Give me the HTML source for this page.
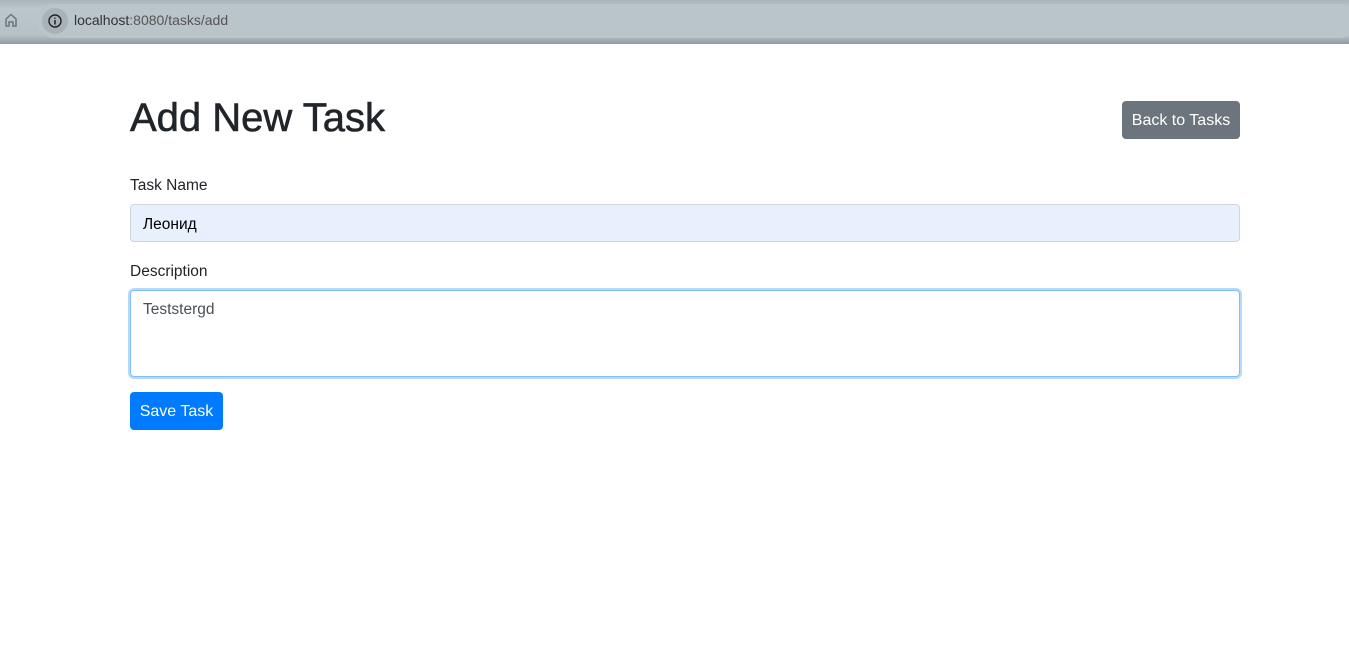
<!DOCTYPE html>
<html><head><meta charset="utf-8"><style>
body{margin:0;width:1349px;height:658px;background:#fff;font-family:"Liberation Sans","DejaVu Sans",sans-serif;color:#212529;position:relative;overflow:hidden}
.bar{position:absolute;left:0;top:0;width:1349px;height:44px;background:linear-gradient(#aab5bb,#bcc6cb 20%,#b6c1c6 80%,#8f9ca3)}
.pill{position:absolute;left:37px;top:4px;width:1320px;height:34px;border-radius:17px;background:#bac5ca}
.info{position:absolute;left:42px;top:8px;width:26px;height:26px;border-radius:13px;background:#a7b3b9}
.url{position:absolute;left:74px;top:12px;font-size:14px;color:#333}
.url span{color:#555}
.a{position:absolute}
h1{position:absolute;left:130px;top:96px;margin:0;font-size:40px;font-weight:normal;color:#212529;-webkit-text-stroke:0.6px #212529}
.btn{position:absolute;color:#fff;font-size:16px;border-radius:4px;display:flex;align-items:center;justify-content:center;padding-top:2px;box-sizing:border-box}
label{position:absolute;left:130px;font-size:15.5px}
.inp{position:absolute;left:130px;width:1110px;border:1px solid #ced4da;border-radius:4px;font-size:15.5px;padding-left:12px;box-sizing:border-box}
</style></head><body>
<div class="bar"></div>
<div class="pill"></div>
<svg class="a" style="left:4px;top:12px" width="14" height="16" viewBox="0 0 14 16"><path d="M2 7L7 2.5 12 7V14H9V10H5V14H2Z" fill="none" stroke="#6b777d" stroke-width="1.5"/></svg>
<div class="info"></div>
<svg class="a" style="left:47px;top:13px" width="16" height="16" viewBox="0 0 16 16"><circle cx="8" cy="8" r="6" fill="none" stroke="#222" stroke-width="1.4"/><path d="M8 7V11.5M8 4.6V5.8" stroke="#222" stroke-width="1.5"/></svg>
<div class="url">localhost<span>:8080/tasks/add</span></div>
<h1>Add New Task</h1>
<div class="btn" style="left:1122px;top:101px;width:118px;height:38px;background:#6c757d">Back to Tasks</div>
<label style="top:177px">Task Name</label>
<div class="inp" style="top:204px;height:38px;background:#e8f0fe;line-height:39px;color:#000">Леонид</div>
<label style="top:263px">Description</label>
<div class="inp" style="top:290px;height:87px;border:1px solid #80bdff;box-shadow:0 0 0 2px #b8d8fc;padding-top:10px;color:#495057">Teststergd</div>
<div class="btn" style="left:130px;top:392px;width:93px;height:38px;background:#007bff">Save Task</div>
</body></html>
